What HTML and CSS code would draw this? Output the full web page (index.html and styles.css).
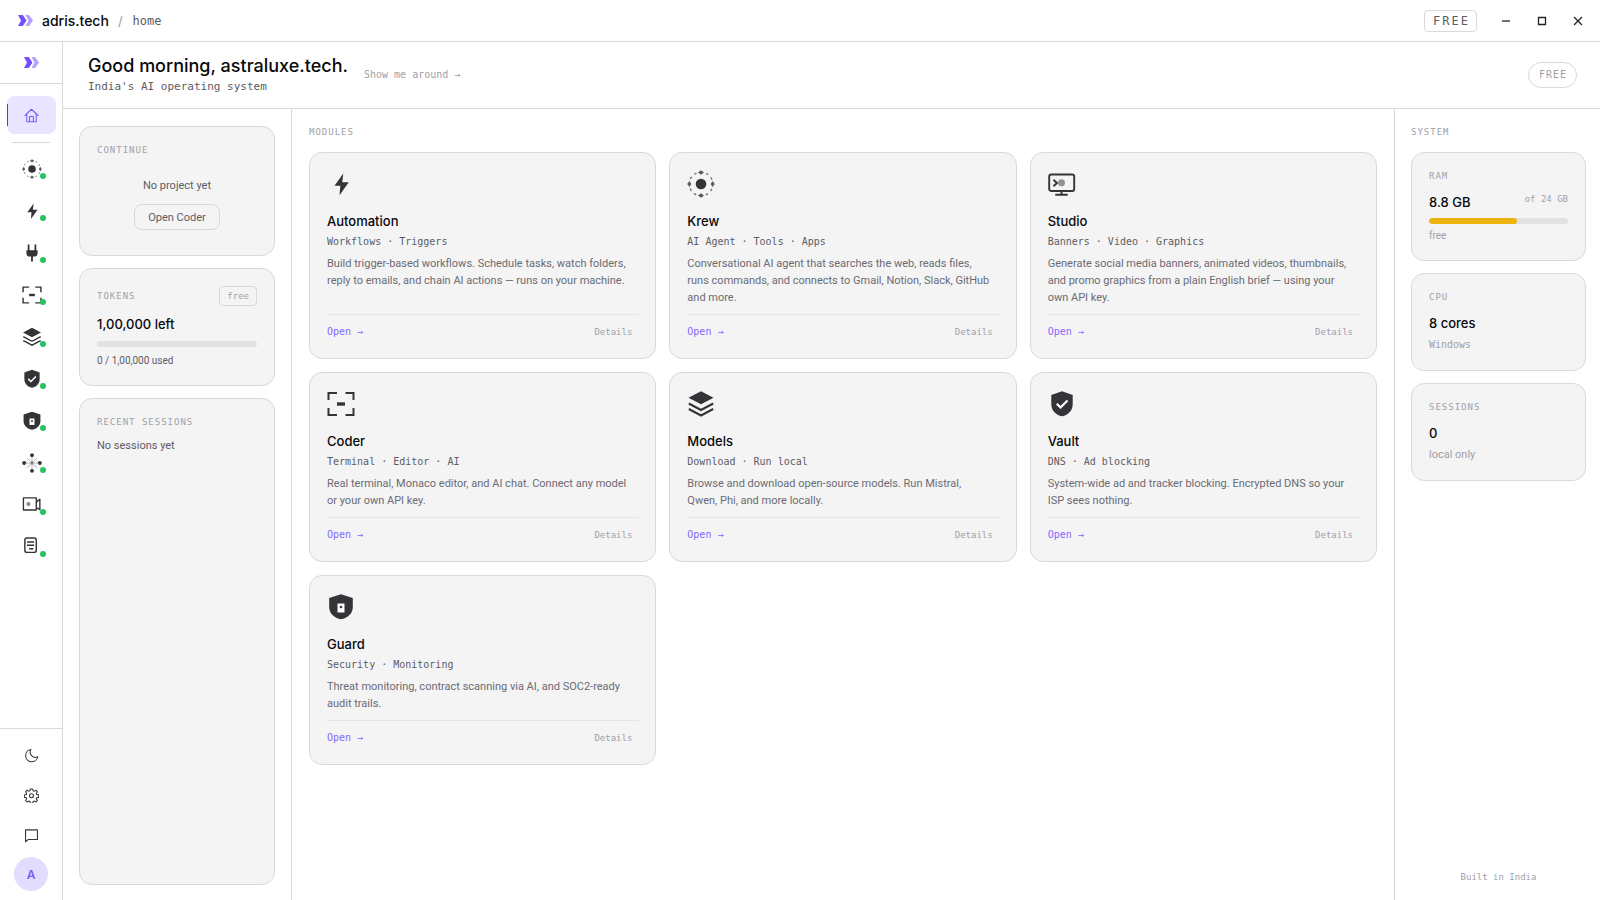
FILE: index.html
```html
<!DOCTYPE html>
<html lang="en">
<head>
<meta charset="utf-8">
<title>adris.tech</title>
<link rel="stylesheet" href="styles.css">
</head>
<body>
<svg class="sprite" aria-hidden="true">
  <symbol id="logo" viewBox="0 0 15 11"><path fill="#7350f8" d="M0 0h4.800l3.700 5.500-3.700 5.500H0l3-5.500z"/><path fill="#b3a0ff" d="M7.500 0h3.500l4 5.500-4 5.500H7.500l3-5.500z"/></symbol>
  <symbol id="home" viewBox="0 0 24 24"><path fill="none" stroke="currentColor" stroke-width="1.700" stroke-linecap="round" stroke-linejoin="round" d="M1.500 12 12 2l10.500 10M4.500 9.500V22h15V9.500M9 22v-8.500h6V22"/></symbol>
  <symbol id="krew" viewBox="0 0 28 28"><circle cx="14" cy="14" r="5.300" fill="currentColor"/><circle cx="14" cy="14" r="11.800" fill="none" stroke="#77777b" stroke-width="1.400" stroke-dasharray="2.600 3.578" stroke-dashoffset="1.300"/><g fill="#5c5c60"><path d="m14 .2 3 2.300-3 2.300-3-2.300zM14 23.200l3 2.300-3 2.300-3-2.300zM2.500 11l1.800 3-1.800 3-2.300-3zM25.500 11l2.300 3-2.300 3-1.800-3z"/></g></symbol>
  <symbol id="bolt" viewBox="0 0 28 28"><path fill="currentColor" d="M16.300 3.500 7.500 15.800h5.800L12.500 25.200 21.800 12.200H15.200z"/></symbol>
  <symbol id="plug" viewBox="0 0 28 28"><path fill="currentColor" d="M8 2h2.500v8h7V2H20v8h1.800v4.500c0 3-1.800 4.500-4.800 4.500h-1.700v7h-2.600v-7H11c-3 0-4.800-1.500-4.800-4.500V10H8z"/></symbol>
  <symbol id="coder" viewBox="0 0 28 28"><path fill="none" stroke="currentColor" stroke-width="2" d="M1.500 10V3h8.500M18.500 3h8v7M26.500 18v7h-8M10 25H1.500v-7"/><path fill="currentColor" d="M10 12.300h8v3.400h-8z"/></symbol>
  <symbol id="layers" viewBox="0 0 28 28"><path fill="currentColor" d="M14 1.200 26.500 7.700 14 14.200 1.500 7.700z"/><path fill="none" stroke="currentColor" stroke-width="2" d="M1.800 13.500 14 20l12.200-6.500M1.800 19 14 25.500 26.200 19"/></symbol>
  <symbol id="vault" viewBox="0 0 28 28"><path fill="currentColor" d="M14 1.200 24.700 5v9c0 6.500-4.300 11-10.700 12.300C7.600 25 3.300 20.500 3.300 14V5z"/><path fill="none" stroke="#fff" stroke-width="2.200" d="m8.800 13.800 3.700 3.700 7-7"/></symbol>
  <symbol id="guard" viewBox="0 0 28 28"><path fill="currentColor" d="M14 1.200 25.800 5v9c0 6.500-5 11-11.800 12.300C7.200 25 2.200 20.500 2.200 14V5z"/><path fill="#fff" d="M10.500 10.500h7v9h-7z"/><circle cx="14" cy="14" r="1.300" fill="currentColor"/></symbol>
  <symbol id="mesh" viewBox="0 0 28 28"><path stroke="#aaaaae" stroke-width="1.200" d="M14 3v22M3 14h22M7 7l14 14M21 7 7 21"/><g fill="currentColor"><circle cx="14" cy="3" r="2.700"/><circle cx="14" cy="25" r="2.700"/><circle cx="3" cy="14" r="2.700"/><circle cx="25" cy="14" r="2.700"/></g><circle cx="14" cy="14" r="2" fill="#77777b"/></symbol>
  <symbol id="video" viewBox="0 0 28 28"><path fill="none" stroke="currentColor" stroke-width="1.900" stroke-linejoin="round" d="M2 4h18v17H2zM20 10l5-4v14.500l-5-3"/><circle cx="9" cy="12.500" r="2.800" fill="#88888c"/></symbol>
  <symbol id="doc" viewBox="0 0 28 28"><rect x="4" y="1.500" width="16" height="20" rx="3" fill="none" stroke="currentColor" stroke-width="2"/><path stroke="currentColor" stroke-width="1.900" d="M7 7h10M7 11.500h10M10 16.500h6"/></symbol>
  <symbol id="studio" viewBox="0 0 28 28"><rect x="1.200" y="4.500" width="25" height="16.500" rx="2" fill="none" stroke="currentColor" stroke-width="1.900"/><path fill="none" stroke="currentColor" stroke-width="1.900" stroke-linecap="round" d="m6 10.300 3 2.700-3 2.700M13.500 21v3.500M8 24.700h11"/><circle cx="13.500" cy="12.800" r="3.500" fill="#939397"/></symbol>
  <symbol id="moon" viewBox="0 0 24 24"><path fill="none" stroke="currentColor" stroke-width="1.700" stroke-linejoin="round" d="M11 2.500A9.800 9.800 0 1 0 22 14 8.300 8.300 0 0 1 11 2.500z"/></symbol>
  <symbol id="gear" viewBox="0 0 24 24"><g fill="none" stroke="currentColor" stroke-width="1.700" stroke-linejoin="round"><path d="M10 1.500h4l.6 3.100 1.700.7 2.600-1.800 2.600 2.600-1.800 2.600.7 1.700 3.100.6v4l-3.100.6-.7 1.700 1.800 2.600-2.600 2.600-2.600-1.800-1.700.7-.6 3.100h-4l-.6-3.100-1.700-.7-2.600 1.800-2.600-2.600 1.800-2.600-.7-1.700-3.100-.6v-4l3.100-.6.7-1.700-1.800-2.600 2.600-2.600 2.600 1.800 1.700-.7z"/><circle cx="12" cy="12.500" r="3.200"/></g></symbol>
  <symbol id="chat" viewBox="0 0 24 24"><path fill="none" stroke="currentColor" stroke-width="1.700" stroke-linejoin="round" d="M2.500 3h19v15.500H6.500l-4 3.500z"/></symbol>
</svg>

<header class="titlebar">
  <svg class="logo"><use href="#logo"/></svg>
  <span class="brand">adris.tech</span>
  <span class="slash">/</span>
  <span class="crumb">home</span>
  <span class="plan">FREE</span>
  <div class="window-controls">
    <button aria-label="Minimize"><svg viewBox="0 0 10 10"><path d="M1 5h8"/></svg></button>
    <button aria-label="Maximize"><svg viewBox="0 0 10 10"><path d="M1.500 1.500h7v7h-7z"/></svg></button>
    <button aria-label="Close"><svg viewBox="0 0 10 10"><path d="m1 1 8 8M9 1 1 9"/></svg></button>
  </div>
</header>

<div class="shell">
  <nav class="sidebar" aria-label="Main">
    <a class="side-logo" href="#" aria-label="adris.tech"><svg class="logo"><use href="#logo"/></svg></a>
    <div class="side-items">
      <a class="side-item active" href="#" aria-label="Home"><svg class="line-icon"><use href="#home"/></svg></a>
      <hr class="side-rule">
      <a class="side-item live" href="#" aria-label="Krew"><svg><use href="#krew"/></svg></a>
      <a class="side-item live" href="#" aria-label="Automation"><svg><use href="#bolt"/></svg></a>
      <a class="side-item live" href="#" aria-label="Connectors"><svg><use href="#plug"/></svg></a>
      <a class="side-item live" href="#" aria-label="Coder"><svg><use href="#coder"/></svg></a>
      <a class="side-item live" href="#" aria-label="Models"><svg><use href="#layers"/></svg></a>
      <a class="side-item live" href="#" aria-label="Vault"><svg><use href="#vault"/></svg></a>
      <a class="side-item live" href="#" aria-label="Guard"><svg><use href="#guard"/></svg></a>
      <a class="side-item live" href="#" aria-label="Network"><svg><use href="#mesh"/></svg></a>
      <a class="side-item live" href="#" aria-label="Video"><svg><use href="#video"/></svg></a>
      <a class="side-item live" href="#" aria-label="Documents"><svg><use href="#doc"/></svg></a>
    </div>
    <div class="side-bottom">
      <button class="side-tool" aria-label="Theme"><svg class="line-icon"><use href="#moon"/></svg></button>
      <button class="side-tool" aria-label="Settings"><svg class="line-icon"><use href="#gear"/></svg></button>
      <button class="side-tool" aria-label="Feedback"><svg class="line-icon"><use href="#chat"/></svg></button>
      <button class="avatar">A</button>
    </div>
  </nav>

  <main class="main">
    <header class="greeting">
      <div>
        <h1>Good morning, astraluxe.tech.</h1>
        <p>India's AI operating system</p>
      </div>
      <button class="tour">Show me around →</button>
      <span class="pill">FREE</span>
    </header>

    <div class="columns">
      <aside class="left">
        <section class="card">
          <h2 class="label">CONTINUE</h2>
          <div class="empty">
            <p class="body-text">No project yet</p>
            <button class="outline">Open Coder</button>
          </div>
        </section>
        <section class="card">
          <div class="row"><h2 class="label">TOKENS</h2><span class="tag">free</span></div>
          <p class="value">1,00,000 left</p>
          <div class="bar"></div>
          <p class="small-text">0 / 1,00,000 used</p>
        </section>
        <section class="card grow">
          <h2 class="label">RECENT SESSIONS</h2>
          <p class="body-text sessions">No sessions yet</p>
        </section>
      </aside>

      <section class="modules">
        <h2 class="label">MODULES</h2>
        <div class="grid">
          <article class="card module">
            <svg><use href="#bolt"/></svg>
            <h3>Automation</h3><p class="tags">Workflows · Triggers</p>
            <p class="desc">Build trigger-based workflows. Schedule tasks, watch folders, reply to emails, and chain AI actions — runs on your machine.</p>
            <footer><button class="open">Open →</button><button class="details">Details</button></footer>
          </article>
          <article class="card module">
            <svg><use href="#krew"/></svg>
            <h3>Krew</h3><p class="tags">AI Agent · Tools · Apps</p>
            <p class="desc">Conversational AI agent that searches the web, reads files, runs commands, and connects to Gmail, Notion, Slack, GitHub and more.</p>
            <footer><button class="open">Open →</button><button class="details">Details</button></footer>
          </article>
          <article class="card module">
            <svg><use href="#studio"/></svg>
            <h3>Studio</h3><p class="tags">Banners · Video · Graphics</p>
            <p class="desc">Generate social media banners, animated videos, thumbnails, and promo graphics from a plain English brief — using your own API key.</p>
            <footer><button class="open">Open →</button><button class="details">Details</button></footer>
          </article>
          <article class="card module">
            <svg><use href="#coder"/></svg>
            <h3>Coder</h3><p class="tags">Terminal · Editor · AI</p>
            <p class="desc">Real terminal, Monaco editor, and AI chat. Connect any model or your own API key.</p>
            <footer><button class="open">Open →</button><button class="details">Details</button></footer>
          </article>
          <article class="card module">
            <svg><use href="#layers"/></svg>
            <h3>Models</h3><p class="tags">Download · Run local</p>
            <p class="desc">Browse and download open-source models. Run Mistral, Qwen, Phi, and more locally.</p>
            <footer><button class="open">Open →</button><button class="details">Details</button></footer>
          </article>
          <article class="card module">
            <svg><use href="#vault"/></svg>
            <h3>Vault</h3><p class="tags">DNS · Ad blocking</p>
            <p class="desc">System-wide ad and tracker blocking. Encrypted DNS so your ISP sees nothing.</p>
            <footer><button class="open">Open →</button><button class="details">Details</button></footer>
          </article>
          <article class="card module">
            <svg><use href="#guard"/></svg>
            <h3>Guard</h3><p class="tags">Security · Monitoring</p>
            <p class="desc">Threat monitoring, contract scanning via AI, and SOC2-ready audit trails.</p>
            <footer><button class="open">Open →</button><button class="details">Details</button></footer>
          </article>
        </div>
      </section>

      <aside class="system">
        <h2 class="label">SYSTEM</h2>
        <section class="card stat">
          <h3 class="label">RAM</h3>
          <div class="row"><p class="value">8.8 GB</p><span class="note">of 24 GB</span></div>
          <div class="bar"><div class="fill" style="width:63%"></div></div>
          <p class="faint small-text">free</p>
        </section>
        <section class="card stat">
          <h3 class="label">CPU</h3>
          <p class="value">8 cores</p>
          <p class="platform">Windows</p>
        </section>
        <section class="card stat">
          <h3 class="label">SESSIONS</h3>
          <p class="value">0</p>
          <p class="faint body-text">local only</p>
        </section>
        <p class="note origin">Built in India</p>
      </aside>
    </div>
  </main>
</div>
</body>
</html>
```
FILE: styles.css
```css
:root {
  --line: #d9d9dc;
  --card: #f4f4f5;
  --ink: #09090b;
  --icon: #343438;
  --mid: #5c5c64;
  --faint: #a0a0a8;
  --accent: #7c5cfc;
  --mono: "DejaVu Sans Mono", "Liberation Mono", monospace;
  --sans: Inter, "Liberation Sans", sans-serif;
  --text: Roboto, "Liberation Sans", sans-serif;
}

* { box-sizing: border-box; margin: 0; }

body {
  height: 100vh;
  display: flex;
  flex-direction: column;
  font-family: var(--sans);
  font-size: 11px;
  color: var(--ink);
  background: #fff;
}

button {
  padding: 0;
  border: 0;
  background: none;
  font: inherit;
  color: inherit;
}

.sprite { display: none; }
.logo { width: 15px; height: 11px; }

.titlebar {
  height: 42px;
  flex: none;
  display: flex;
  align-items: center;
  padding: 0 12px 0 18px;
  border-bottom: 1px solid var(--line);
}
.brand { margin-left: 9px; font-size: 14px; font-weight: 500; }
.slash { margin-left: 9px; font-size: 13px; color: var(--faint); }
.crumb { margin-left: 10px; font-family: var(--mono); font-size: 12px; color: var(--mid); }
.plan {
  margin-left: auto;
  padding: 0 6px 0 8px;
  border: 1px solid var(--line);
  border-radius: 4px;
  font-family: var(--mono);
  font-size: 12px;
  line-height: 20px;
  letter-spacing: 2px;
  color: var(--mid);
}
.window-controls { display: flex; gap: 16px; margin-left: 19px; }
.window-controls button { width: 20px; height: 20px; display: grid; place-items: center; }
.window-controls svg { width: 10px; height: 10px; fill: none; stroke: #222; stroke-width: 1.300; }

.shell { flex: 1; min-height: 0; display: flex; }

.sidebar {
  width: 63px;
  flex: none;
  display: flex;
  flex-direction: column;
  border-right: 1px solid var(--line);
  color: var(--icon);
}
.side-logo {
  height: 42px;
  display: grid;
  place-items: center;
  border-bottom: 1px solid var(--line);
}
.side-items {
  flex: 1;
  padding: 12px 6px 0 7px;
  display: flex;
  flex-direction: column;
  gap: 4px;
}
.side-item {
  position: relative;
  height: 38px;
  flex: none;
  display: grid;
  place-items: center;
  border-radius: 8px;
  color: inherit;
}
.side-item svg { width: 20px; height: 20px; }
.side-item .line-icon, .side-tool .line-icon { width: 15px; height: 15px; }
.side-item.active { background: #e9e4ff; color: var(--accent); }
.side-item.active::before {
  content: "";
  position: absolute;
  left: 0;
  top: 8px;
  width: 1px;
  height: 22px;
  background: #5b35e0;
}
.side-item.live::after {
  content: "";
  position: absolute;
  right: 10px;
  bottom: 9px;
  width: 6px;
  height: 6px;
  border-radius: 50%;
  background: #22c55e;
}
.side-rule { margin: 4px 6px 3px 5px; border: 0; border-top: 1px solid var(--line); }
.side-bottom {
  display: flex;
  flex-direction: column;
  align-items: center;
  gap: 4px;
  padding: 8px 0 9px;
  border-top: 1px solid var(--line);
}
.side-tool { width: 36px; height: 36px; display: grid; place-items: center; }
.avatar {
  width: 34px;
  height: 34px;
  border-radius: 50%;
  background: #e2dcff;
  color: var(--accent);
  font-size: 12px;
  font-weight: 600;
}

.main { flex: 1; min-width: 0; display: flex; flex-direction: column; }
.greeting {
  height: 67px;
  flex: none;
  display: flex;
  align-items: center;
  padding: 0 23px 0 25px;
  border-bottom: 1px solid var(--line);
}
.greeting h1 { font-size: 18px; line-height: 24px; font-weight: 500; }
.greeting p { font-family: var(--mono); font-size: 11px; line-height: 18px; color: var(--mid); }
.tour { margin-left: 16px; padding-bottom: 2px; font-family: var(--mono); font-size: 10px; color: var(--faint); }
.pill {
  margin-left: auto;
  padding: 0 9px 0 10px;
  border: 1px solid var(--line);
  border-radius: 13px;
  font-family: var(--mono);
  font-size: 10px;
  line-height: 24px;
  letter-spacing: 1px;
  color: var(--faint);
}

.columns { flex: 1; min-height: 0; display: flex; }
.left {
  width: 229px;
  flex: none;
  display: flex;
  flex-direction: column;
  gap: 12px;
  padding: 17px 16px 15px;
  border-right: 1px solid var(--line);
}
.card {
  padding: 17px;
  border: 1px solid var(--line);
  border-radius: 13px;
  background: var(--card);
}
.grow { flex: 1; }
.label {
  font-family: var(--mono);
  font-size: 9px;
  line-height: 12px;
  font-weight: 400;
  letter-spacing: 1px;
  color: var(--faint);
}
.row { display: flex; justify-content: space-between; align-items: center; }
.value { font-size: 13px; line-height: 20px; font-weight: 500; }
.body-text { font-family: var(--text); font-size: 11px; line-height: 16px; color: var(--mid); }
.small-text { font-family: var(--text); font-size: 10px; line-height: 14px; color: var(--mid); }
.note, .platform { font-family: var(--mono); font-size: 9px; line-height: 16px; color: var(--faint); }
.platform { font-size: 10px; }
.body-text.faint, .small-text.faint { color: var(--faint); }

.empty {
  display: flex;
  flex-direction: column;
  align-items: center;
  gap: 10px;
  padding: 22px 0 8px;
}
.outline {
  height: 26px;
  padding: 0 13px;
  border: 1px solid var(--line);
  border-radius: 8px;
  font-family: var(--text);
  font-size: 11px;
  color: var(--mid);
}
.tag {
  padding: 0 7px;
  border: 1px solid var(--line);
  border-radius: 4px;
  font-family: var(--mono);
  font-size: 9px;
  line-height: 18px;
  color: var(--faint);
}
.left .value { margin: 8px 0 7px; }
.bar { height: 6px; border-radius: 3px; background: #e2e2e5; overflow: hidden; }
.fill { height: 100%; border-radius: 3px; background: #eeb20c; }
.bar + .small-text { margin-top: 7px; }
.sessions { margin-top: 10px; }

.modules { flex: 1; min-width: 0; padding: 17px; }
.grid { display: grid; grid-template-columns: repeat(3, 1fr); gap: 13px; margin-top: 14px; }
.module { display: flex; flex-direction: column; padding: 17px 16px 17px 17px; }
.module svg { width: 28px; height: 28px; color: var(--icon); }
.module h3 { margin-top: 13px; font-size: 13px; line-height: 20px; font-weight: 500; }
.tags { margin-top: 3px; font-family: var(--mono); font-size: 10px; line-height: 16px; color: var(--mid); }
.desc { margin: 5px 0 8px; padding-right: 10px; font-family: var(--text); font-size: 11px; line-height: 17px; color: #6b6b73; }
.module footer {
  margin-top: auto;
  display: flex;
  justify-content: space-between;
  padding: 8px 7px 0 0;
  border-top: 1px solid #e5e5e8;
  font-family: var(--mono);
  font-size: 10px;
  line-height: 18px;
}
.open { color: #8468ff; }
.details { font-size: 9px; color: var(--faint); }

.system {
  width: 206px;
  flex: none;
  display: flex;
  flex-direction: column;
  padding: 17px 14px 15px 16px;
  border-left: 1px solid var(--line);
}
.stat { margin-top: 12px; }
.system > .label + .stat { margin-top: 14px; }
.stat .value { margin: 10px 0 4px; }
.stat .bar { margin-top: 2px; }
.stat .bar + .small-text { margin-top: 5px; }
.origin { margin-top: auto; text-align: center; }
```
